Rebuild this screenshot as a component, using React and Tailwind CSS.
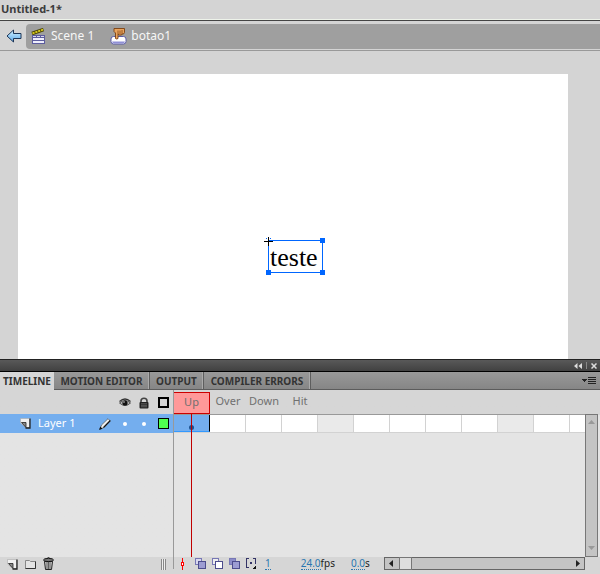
import React from "react";

const frames = Array.from({ length: 11 }, (_, i) => i + 2);

const BackArrow = () => (
  <svg className="w-4 h-4" viewBox="0 0 16 16">
    <defs>
      <linearGradient id="back" x1="0" y1="0" x2="0" y2="1">
        <stop offset="0" stopColor="#d5f3ff" />
        <stop offset="1" stopColor="#5aa9ec" />
      </linearGradient>
    </defs>
    <path d="M1 8L7.5 2v3.5H15v5H7.5V14z" fill="url(#back)" stroke="#1c3557" strokeLinejoin="round" />
  </svg>
);

const SceneIcon = () => (
  <svg className="w-4 h-4" viewBox="0 0 16 16">
    <path d="M1 5.500L12.500 1.500" stroke="#4a4408" strokeWidth="3.500" />
    <path d="M1.500 5.300L12.300 1.500" stroke="#d8cb1c" strokeWidth="1.800" strokeDasharray="2.200 .8" />
    <path d="M1 7h13v9H1z" fill="#5c5c9e" />
    <path d="M2 8h3v1H2zM6 8h3v1H6zM10 8h3v1h-3z" fill="#d8d8f0" />
    <path d="M2 10h11v2H2zM2 13h11v2H2z" fill="#eeeefb" />
  </svg>
);

const ButtonIcon = () => (
  <svg className="w-[17px] h-[17px]" viewBox="0 0 17 17">
    <rect x="1" y="8.500" width="15" height="7.500" rx="2.500" fill="#fff" stroke="#5d5da8" />
    <path d="M2 13.500h13q-.5 2-2 2H4q-1.500 0-2-2z" fill="#8f8fd6" />
    <path d="M4 .5h10.500v4l-1 1.500H12l-.5 1h-2L8 6v4.500q-1.300 1-2.500 0V5L4 3.500z" fill="#e9a45e" stroke="#7a3f10" strokeWidth=".9" />
    <path d="M8 2.500V6M10 2.500V6.500M12 2v4" stroke="#8f501c" strokeWidth=".9" />
  </svg>
);

const EyeIcon = () => (
  <svg className="w-3 h-3" viewBox="0 0 12 12">
    <path d="M.5 6Q6 1 11.500 6 6 11 .5 6z" fill="#bbb" stroke="#333" strokeWidth=".8" />
    <path d="M.5 4.500Q6-.5 11.500 4.500" fill="none" stroke="#333" strokeWidth="1.200" />
    <circle cx="6" cy="6" r="2.600" fill="#111" />
    <circle cx="5" cy="5" r=".8" fill="#ddd" />
  </svg>
);

const LockIcon = () => (
  <svg className="w-3 h-3" viewBox="0 0 12 12">
    <path d="M3 6V4Q3 1.200 6 1.200T9 4v2" fill="none" stroke="#444" strokeWidth="1.600" />
    <rect x="1.500" y="5" width="9" height="6.500" rx="1" fill="#222" />
    <path d="M3 6.800h6M3 8.300h6M3 9.800h6" stroke="#777" strokeWidth=".7" />
  </svg>
);

const PageIcon = () => (
  <svg className="w-[11px] h-[11px]" viewBox="0 0 11 11">
    <path d="M.5.5h9v9H6L.5 5z" fill="#f0f0f0" stroke="#aaa" strokeWidth=".6" />
    <path d="M10 .5V10H5.500" fill="none" stroke="#222" strokeWidth="1.300" />
    <path d="M1.500 4.500H6V9.500z" fill="#888" stroke="#222" strokeWidth=".8" strokeLinejoin="round" />
  </svg>
);

const PencilIcon = () => (
  <svg className="w-3 h-3" viewBox="0 0 12 12">
    <path d="M1 11l1.500-4L9 .7 11.300 3 5 9.500z" fill="#f0f0f0" stroke="#555" strokeWidth=".7" />
    <path d="M4.500 9.500L11.300 2.500" stroke="#111" strokeWidth="1.100" />
    <path d="M0 12l1.300-3.500 2.200 2.200z" fill="#111" />
  </svg>
);

const FolderIcon = () => (
  <svg className="w-[11px] h-[11px]" viewBox="0 0 11 11">
    <path d="M.5 9.500v-8h4l1 1h5v7z" fill="#e4e4e4" stroke="#888" />
    <path d="M.5 9.500h10v-7" fill="none" stroke="#333" />
  </svg>
);

const TrashIcon = () => (
  <svg className="w-[11px] h-[13px]" viewBox="0 0 11 13">
    <path d="M1.500 4.500h8l-1 8h-6z" fill="#ccc" stroke="#222" />
    <path d="M4 5v7M5.500 5v7M7 5v7" stroke="#444" strokeWidth=".8" />
    <ellipse cx="5.500" cy="3" rx="5" ry="1.600" fill="#777" stroke="#111" />
    <path d="M4 1.500Q5.500-.5 7 1.500" fill="none" stroke="#222" />
  </svg>
);

const PlayheadIcon = () => (
  <svg className="w-[3px] h-3" viewBox="0 0 3 12" shapeRendering="crispEdges">
    <path d="M1 0h1v4h1v4H2v4H1V8H0V4h1z" fill="#f00" />
    <path d="M1 5h1v2H1z" fill="#fff" />
  </svg>
);

const OnionIcon = ({ back, front }) => (
  <svg className="w-[11px] h-[11px]" viewBox="0 0 11 11" shapeRendering="crispEdges">
    <rect x=".5" y=".5" width="6" height="6" fill={back} stroke="#7777b5" />
    <rect x="3.500" y="3.500" width="7" height="7" fill={front} stroke="#4c4c8c" />
  </svg>
);

const MarkersIcon = () => (
  <svg className="w-[11px] h-[11px]" viewBox="0 0 11 11" shapeRendering="crispEdges">
    <path d="M3 .5H.5v9H3M7 .5h2.500V6" fill="none" stroke="#333366" />
    <path d="M4 4h2v2H4z" fill="#333366" />
    <path d="M10 7v4H6z" fill="#111" />
  </svg>
);

const Triangle = ({ d, fill }) => (
  <svg className="w-[7px] h-[7px]" viewBox="0 0 7 7">
    <path d={d} fill={fill} />
  </svg>
);

const DocumentBar = () => (
  <header>
    <h1 className="h-5 pl-px border-b border-[#eef3ea] text-[11px] leading-[18px] font-bold text-[#3c3c3c]">Untitled-1*</h1>
    <nav className="flex items-center h-[31px] pt-px border-t border-b border-t-[#444] border-b-[#999]">
      <button aria-label="Back" className="flex w-[26px] pl-[6px]">
        <BackArrow />
      </button>
      <div className="flex flex-1 items-center gap-4 h-[25px] pl-[5px] rounded-l bg-[#9f9f9f] text-xs text-[#f6f6f6]">
        <a href="#scene" className="flex items-center gap-1">
          <SceneIcon />
          Scene 1
        </a>
        <a href="#botao1" className="flex items-center gap-1">
          <ButtonIcon />
          botao1
        </a>
      </div>
    </nav>
  </header>
);

const Stage = () => (
  <main className="flex flex-1 min-h-0 pt-[23px] pl-[18px] pr-8">
    <div className="relative flex-1 bg-white">
      <div className="absolute left-[250px] top-[166px] w-[55px] h-[33px] pl-px border border-[#0066ff] font-['Liberation_Serif',serif] text-[26px] leading-[34px] text-black">
        teste
        <i className="absolute -right-[3px] -top-[3px] w-[5px] h-[5px] bg-[#0066ff]" />
        <i className="absolute -right-[3px] -bottom-[3px] w-[5px] h-[5px] bg-[#0066ff]" />
        <i className="absolute -left-[3px] -bottom-[3px] w-[5px] h-[5px] bg-[#0066ff]" />
        <svg className="absolute -left-[5px] -top-[4px] w-[9px] h-[9px]" viewBox="0 0 9 9" shapeRendering="crispEdges">
          <path d="M2 1h1v1H2zM6 1h1v1H6z" fill="#0066ff" />
          <path d="M4 0h1v9H4zM0 4h9v1H0z" fill="#000" />
        </svg>
      </div>
    </div>
  </main>
);

const PanelTitle = () => (
  <div className="flex items-center justify-end gap-1 h-[13px] pr-[3px] border-t border-b border-t-[#222] border-b-black bg-linear-to-b from-[#595959] to-[#414141]">
    <button aria-label="Collapse" className="flex">
      <svg className="w-2 h-[6px]" viewBox="0 0 8 6">
        <path d="M3.500 0v6L0 3zM8 0v6L4.500 3z" fill="#ddd" />
      </svg>
    </button>
    <span className="w-px h-[7px] bg-[#888]" />
    <button aria-label="Close" className="flex">
      <svg className="w-[6px] h-[6px]" viewBox="0 0 6 6">
        <path d="M.5.5l5 5M5.500.5l-5 5" stroke="#ddd" strokeWidth="1.500" />
      </svg>
    </button>
  </div>
);

const tab = "h-full border-r border-r-[#5e5e5e] shadow-[inset_-1px_0_0_#aaa] text-[#333]";

const Tabs = () => (
  <div className="flex h-[18px] border-b border-b-[#5c5c5c] bg-linear-to-b from-[#999] to-[#868686] text-[10px] leading-4 font-bold whitespace-nowrap">
    <div role="tablist" className="flex flex-1">
      <button role="tab" aria-selected="true" className="w-[54px] h-[18px] bg-[#d6d6d6] text-[#333]">TIMELINE</button>
      <button role="tab" className={`${tab} w-24`}>MOTION EDITOR</button>
      <button role="tab" className={`${tab} w-[54px]`}>OUTPUT</button>
      <button role="tab" className={`${tab} w-[107px]`}>COMPILER ERRORS</button>
    </div>
    <button aria-label="Panel menu" className="flex items-center pr-1">
      <svg className="w-[14px] h-2" viewBox="0 0 14 8" shapeRendering="crispEdges">
        <path d="M0 2h5L2.500 5z" fill="#222" />
        <path d="M6 0h8v1H6zM6 2h8v1H6zM6 4h8v1H6zM6 6h8v1H6z" fill="#222" />
      </svg>
    </button>
  </div>
);

const LayerList = () => (
  <section className="w-[173px] shrink-0">
    <div className="flex items-center h-6 pt-px pl-[119px]">
      <button aria-label="Show or hide all layers" className="w-[19px]"><EyeIcon /></button>
      <button aria-label="Lock all layers" className="w-5"><LockIcon /></button>
      <button aria-label="Outline all layers" className="w-[11px] h-[11px] border-2 border-black" />
    </div>
    <div className="flex items-center h-[19px] pl-5 bg-[#74aeee] text-[11px] leading-4 text-white">
      <PageIcon />
      <span className="w-[68px] pl-[7px] pb-[2px]">Layer 1</span>
      <PencilIcon />
      <button aria-label="Visible" className="w-1 h-1 ml-3 rounded-full bg-white" />
      <button aria-label="Unlocked" className="w-1 h-1 ml-[15px] rounded-full bg-white" />
      <button aria-label="Layer colour" className="w-[11px] h-[11px] ml-3 border border-black bg-[#4fff4f]" />
    </div>
  </section>
);

const FrameGrid = () => (
  <section className="relative flex-1 min-w-0 overflow-hidden border-l border-l-[#999]">
    <div className="flex h-[24px] pt-[2px] text-[11px] leading-[17px] text-[#707070]">
      <span className="w-9 h-[22px] text-center border border-l-0 border-[#cc0000] bg-[#ff9999]">Up</span>
      <span className="w-9 text-center">Over</span>
      <span className="w-9 text-center">Down</span>
      <span className="w-9 text-center">Hit</span>
    </div>
    <div className="flex h-[19px] border-t border-b border-t-[#999] border-b-[#d2d2d2]">
      <button aria-label="Frame 1" className="w-9 shrink-0 border-r border-r-black border-b border-b-[#3399ff] bg-[#74aeee]" />
      {frames.map((n) => (
        <button
          key={n}
          aria-label={`Frame ${n}`}
          className={n % 5 === 0 ? "w-9 shrink-0 border-r border-[#d2d2d2] bg-[#eaeaea]" : "w-9 shrink-0 border-r border-[#d2d2d2] bg-white"}
        />
      ))}
    </div>
    <div className="h-[124px] bg-[#e4e4e4]" />
    {/* playhead and keyframe dot */}
    <i className="absolute left-[15px] top-[35px] w-[5px] h-[5px] rounded-full bg-[#1c5290]" />
    <i className="absolute left-[17px] top-6 bottom-0 w-px bg-[#c00000]" />
  </section>
);

const VerticalScroll = () => (
  <div className="flex flex-col justify-between items-center w-[13px] mt-6 mr-[2px] py-1 border border-[#777] bg-[#c4c4c4]">
    <button aria-label="Scroll up" className="flex"><Triangle d="M3.500 1L7 5H0z" fill="#999" /></button>
    <button aria-label="Scroll down" className="flex"><Triangle d="M3.500 5L0 1h7z" fill="#999" /></button>
  </div>
);

const hot = "border-b border-dotted border-[#2a76b0] text-[#2a76b0]";

const Footer = () => (
  <footer className="flex h-[17px] text-[10px] leading-[11px] text-[#222]">
    <div className="flex items-start w-[173px] pl-[7px] gap-[7px]">
      <button aria-label="New layer" className="flex pt-[2px]"><PageIcon /></button>
      <button aria-label="New folder" className="flex pt-[2px]"><FolderIcon /></button>
      <button aria-label="Delete" className="flex"><TrashIcon /></button>
      <span className="w-[5px] h-[11px] ml-auto mt-[2px] mr-[7px] border-l border-r border-[#888] bg-[#eee]">
        <span className="block w-px h-full mx-auto bg-[#888]" />
      </span>
    </div>
    <div className="flex items-start flex-1 border-l border-l-[#999] pt-px h-3">
      <button aria-label="Center frame" className="flex w-[21px] pl-[7px]"><PlayheadIcon /></button>
      <button aria-label="Onion skin" className="flex w-[17px]"><OnionIcon back="#d8d8ee" front="#9c9cd2" /></button>
      <button aria-label="Onion skin outlines" className="flex w-[17px]"><OnionIcon back="#eee" front="#fff" /></button>
      <button aria-label="Edit multiple frames" className="flex w-[17px]"><OnionIcon back="#8c8cc8" front="#9c9cd2" /></button>
      <button aria-label="Onion markers" className="flex w-[19px]"><MarkersIcon /></button>
      <button className={hot}>1</button>
      <button className={`${hot} ml-[30px]`}>24.0</button>
      <span>fps</span>
      <button className={`${hot} ml-4`}>0.0</button>
      <span>s</span>
    </div>
    <div className="flex items-center justify-between w-[201px] h-[13px] mr-[15px] pl-[3px] pr-[2px] border border-[#666] bg-[#c4c4c4]">
      <button aria-label="Scroll left" className="flex"><Triangle d="M5 0v7L1 3.500z" fill="#222" /></button>
      <span className="w-[13px] h-[13px] ml-1 mr-auto border border-[#777] bg-[#dedede]" />
      <button aria-label="Scroll right" className="flex"><Triangle d="M1 0v7l4-3.500z" fill="#222" /></button>
    </div>
  </footer>
);

const App = () => (
  <div className="flex flex-col h-screen bg-[#d4d4d4] font-['Noto_Sans',sans-serif]">
    <DocumentBar />
    <Stage />
    <PanelTitle />
    <Tabs />
    <div className="bg-[#d6d6d6]">
      <div className="flex bg-linear-to-b from-[#d6d6d6] from-15% to-[#e4e4e4] to-15%">
        <LayerList />
        <FrameGrid />
        <VerticalScroll />
      </div>
      <Footer />
    </div>
  </div>
);

export default App;
